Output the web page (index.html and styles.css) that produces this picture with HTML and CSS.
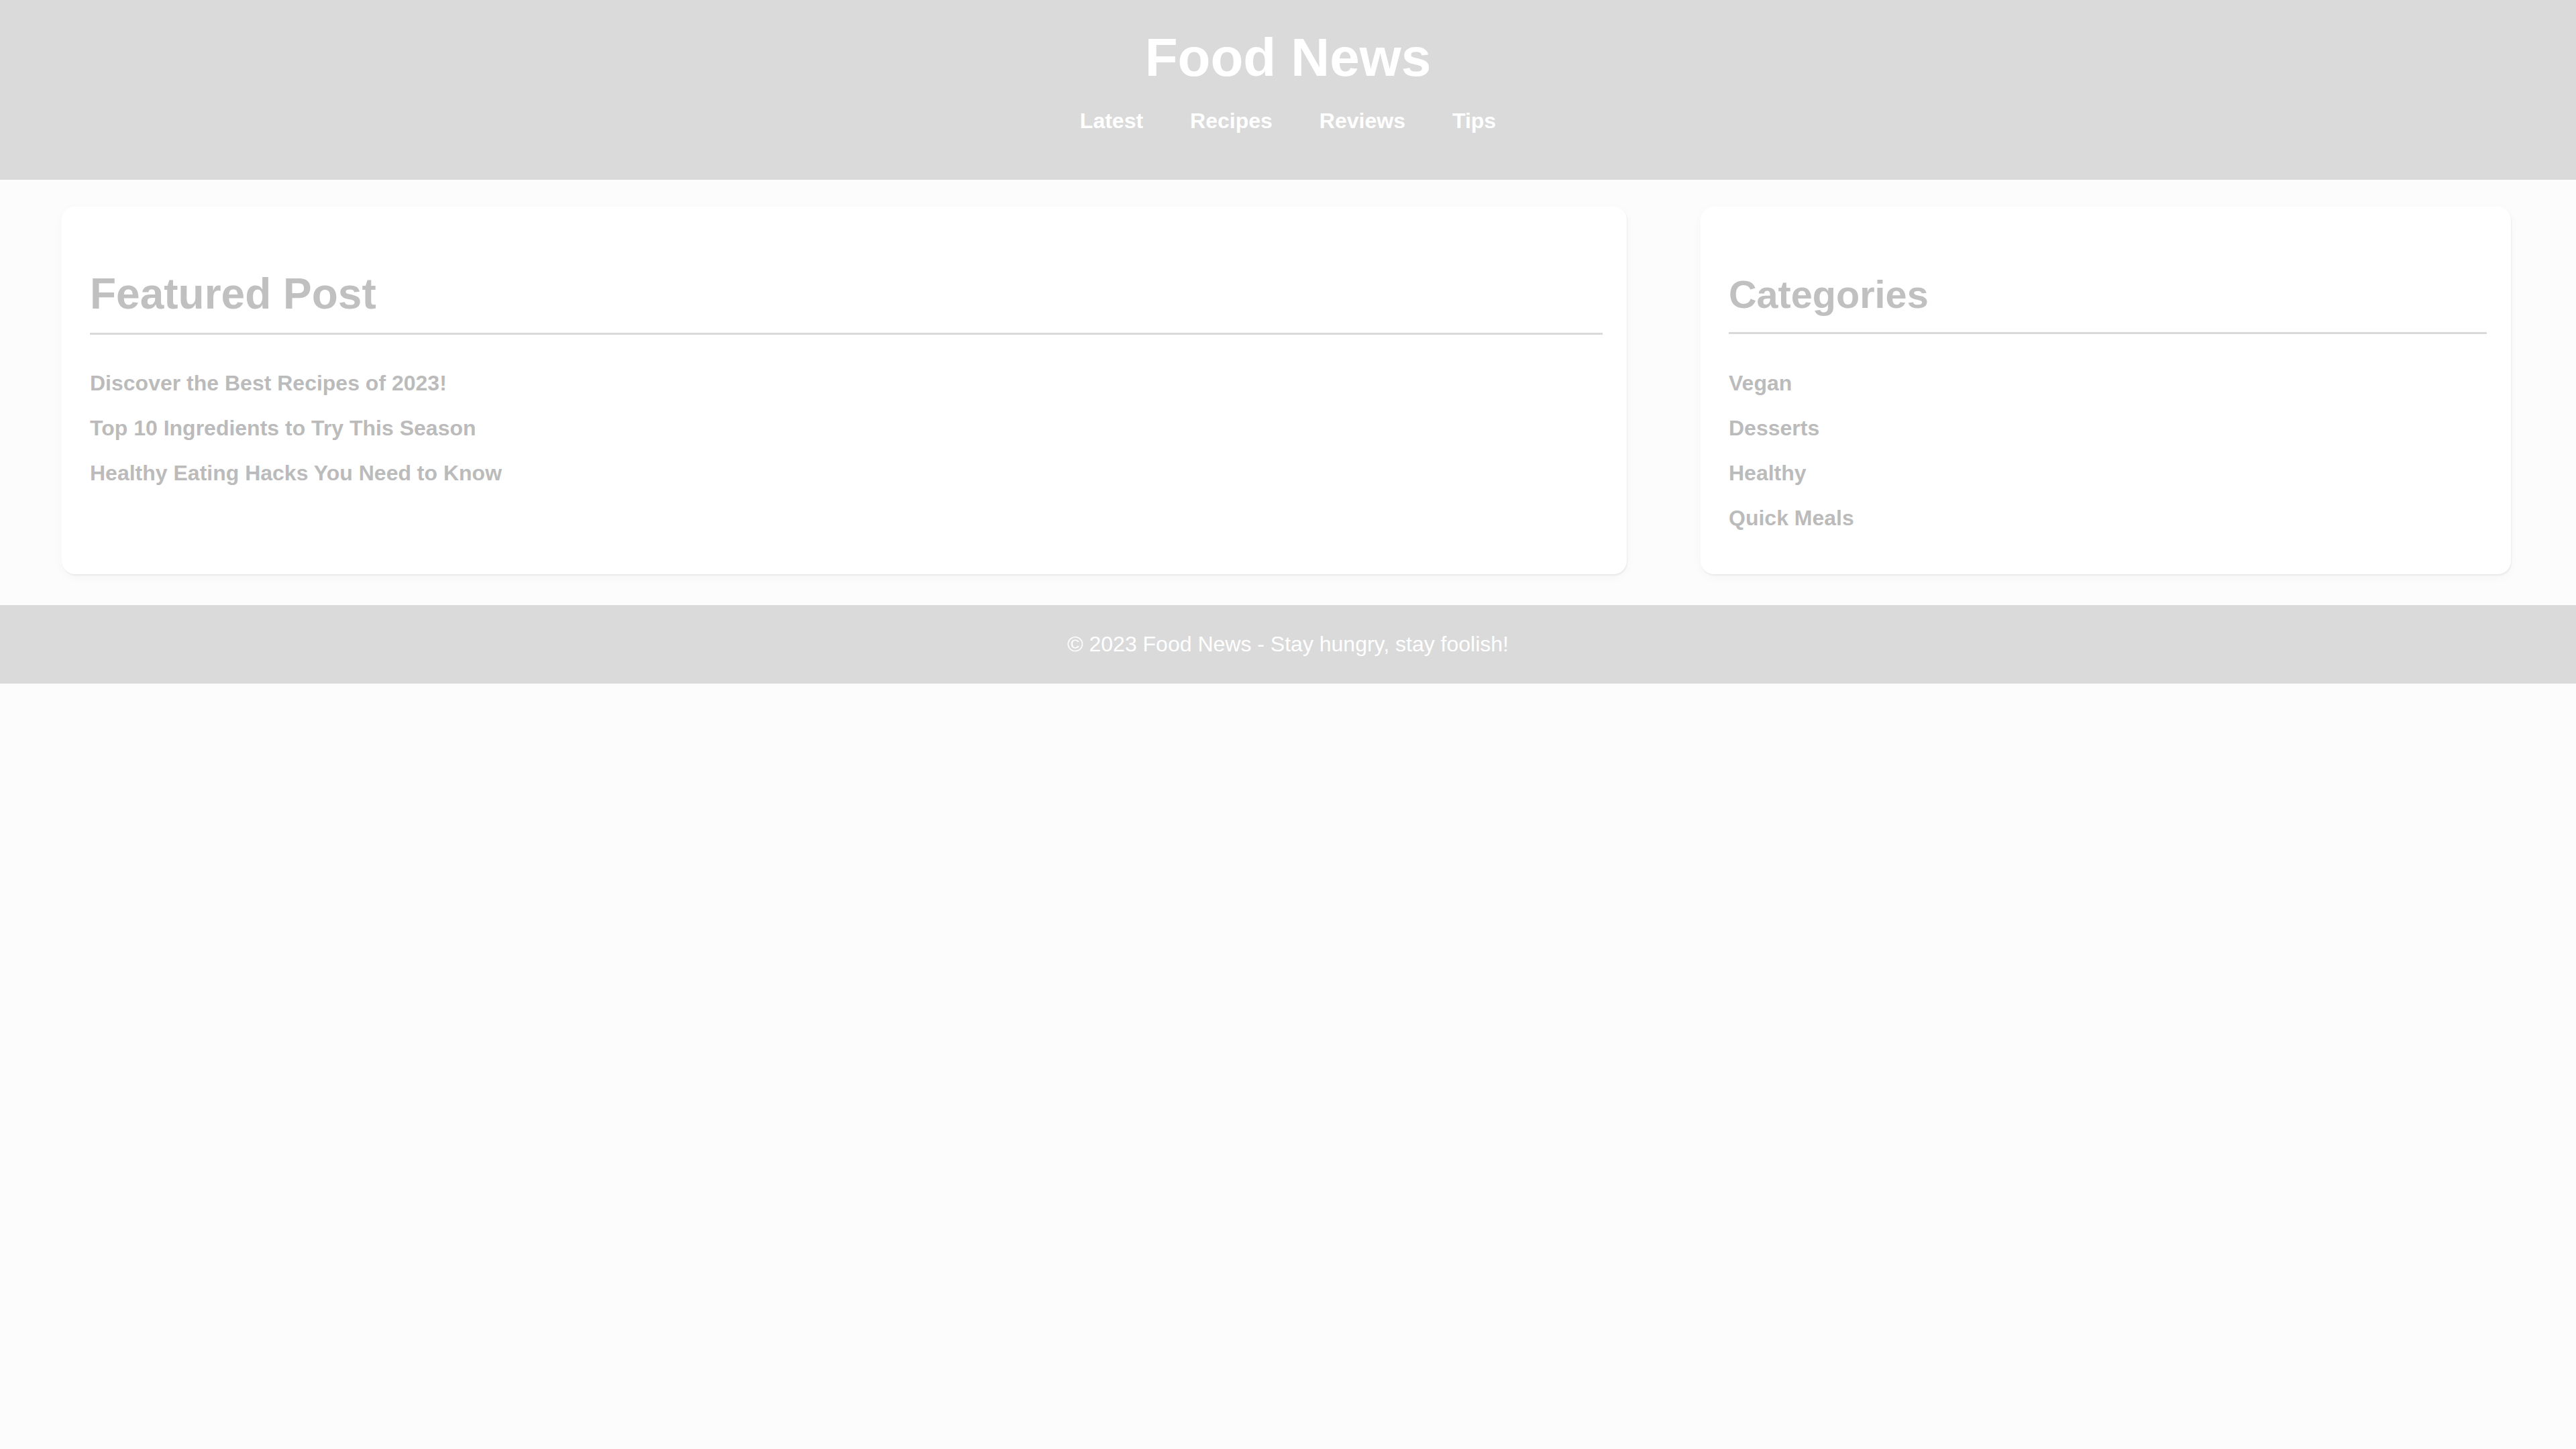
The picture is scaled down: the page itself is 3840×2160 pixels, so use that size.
FILE: index.html
```html
<!DOCTYPE html>
<html lang="en">
<head>
<meta charset="utf-8">
<title>Food News</title>
<link rel="stylesheet" href="styles.css">
</head>
<body>
<header class="site-header">
  <h1 class="site-title">Food News</h1>
  <nav>
    <ul class="nav-list">
      <li><a href="#">Latest</a></li>
      <li><a href="#">Recipes</a></li>
      <li><a href="#">Reviews</a></li>
      <li><a href="#">Tips</a></li>
    </ul>
  </nav>
</header>
<main class="content">
  <section class="card card-main">
    <h2 class="card-title">Featured Post</h2>
    <ul class="link-list">
      <li><a href="#">Discover the Best Recipes of 2023!</a></li>
      <li><a href="#">Top 10 Ingredients to Try This Season</a></li>
      <li><a href="#">Healthy Eating Hacks You Need to Know</a></li>
    </ul>
  </section>
  <aside class="card card-side">
    <h2 class="card-title">Categories</h2>
    <ul class="link-list">
      <li><a href="#">Vegan</a></li>
      <li><a href="#">Desserts</a></li>
      <li><a href="#">Healthy</a></li>
      <li><a href="#">Quick Meals</a></li>
    </ul>
  </aside>
</main>
<footer class="site-footer">
  <p>© 2023 Food News - Stay hungry, stay foolish!</p>
</footer>
</body>
</html>
```
FILE: styles.css
```css
* { box-sizing: border-box; }

html, body {
  margin: 0;
  padding: 0;
  background: #fcfcfc;
  font-family: "Liberation Sans", Arial, sans-serif;
}

a { text-decoration: none; color: inherit; }

ul { list-style: none; margin: 0; padding: 0; }

.site-header {
  background: #dadada;
  height: 268px;
  padding-top: 40px;
  text-align: center;
}

.site-title {
  margin: 0;
  font-size: 80px;
  line-height: 92px;
  font-weight: 700;
  color: #ffffff;
}

.nav-list {
  margin-top: 28px;
  display: flex;
  justify-content: center;
  gap: 70px;
}

.nav-list li {
  font-size: 32px;
  line-height: 40px;
  font-weight: 700;
  color: #ffffff;
}

.content {
  display: grid;
  grid-template-columns: 2333fr 1208fr;
  gap: 110px;
  padding: 40px 97px 46px 92px;
  align-items: stretch;
}

.card {
  background: #ffffff;
  border-radius: 20px;
  padding: 40px 36px 37px 42px;
  box-shadow: 1px 2px 2px rgba(0, 0, 0, 0.06), 0 4px 16px rgba(0, 0, 0, 0.03);
}

.card-title {
  margin: 0;
  font-weight: 700;
  color: #c0c0c0;
  border-bottom: 3px solid #d9d9d9;
}

.card-main .card-title {
  font-size: 64px;
  line-height: 73.6px;
  margin-top: 54px;
  padding-bottom: 20px;
}

.card-side .card-title {
  font-size: 57.6px;
  line-height: 66.2px;
  margin-top: 58px;
  padding-bottom: 23px;
}

.link-list li {
  font-size: 32px;
  line-height: 40px;
  font-weight: 700;
  color: #bbbbbb;
  margin-bottom: 27px;
}

.card-main .link-list { margin-top: 52px; }
.card-side .link-list { margin-top: 53px; }

.site-footer {
  background: #dadada;
  text-align: center;
  padding: 40px 0;
}

.site-footer p {
  margin: 0;
  font-size: 32px;
  line-height: 37px;
  color: #ffffff;
}
```
